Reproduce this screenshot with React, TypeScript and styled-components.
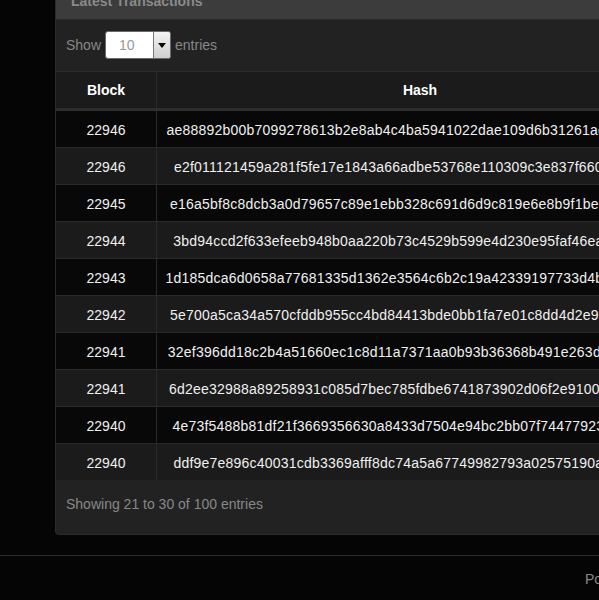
import React from 'react';
import styled, { createGlobalStyle } from 'styled-components';

const GlobalStyle = createGlobalStyle`
  html, body {
    margin: 0;
    padding: 0;
    background: #050505;
    overflow: hidden;
  }
  body {
    font-family: "Liberation Sans", Arial, sans-serif;
    font-size: 14px;
    color: #eee;
  }
`;

const Page = styled.div`
  width: 1400px;
  margin-top: -20px;
`;

const Content = styled.div`
  padding-left: 55px;
  width: 1200px;
`;

const Panel = styled.div`
  background: #222;
  border: 1px solid #2c2c2c;
  border-radius: 4px;
  overflow: hidden;
`;

const PanelHeading = styled.div`
  background: #3c3c3c;
  color: #8a8a8a;
  font-weight: 700;
  line-height: 20px;
  padding: 10px 15px 8px;
  border-bottom: 1px solid #2a2a2a;
`;

const Controls = styled.div`
  display: flex;
  align-items: center;
  gap: 4px;
  padding: 11px 10px 12px;
  color: #888;
  line-height: 28px;
`;

const Select = styled.div`
  display: flex;
  width: 66px;
  height: 28px;
  box-sizing: border-box;
  background: #fff;
  border: 1px solid #6a6a6a;
  border-radius: 3px;
  overflow: hidden;
`;

const SelectValue = styled.span`
  flex: 1;
  padding-left: 13px;
  color: #999;
  line-height: 26px;
`;

const SelectButton = styled.span`
  width: 16px;
  display: flex;
  align-items: center;
  justify-content: center;
  border-left: 1px solid #777;
  background: linear-gradient(#f4f4f4, #cfcfcf);
`;

const Table = styled.table`
  width: 100%;
  border-collapse: collapse;
`;

const Th = styled.th<{ $w?: number }>`
  width: ${({ $w }) => ($w ? `${$w}px` : 'auto')};
  background: #1b1b1b;
  color: #fff;
  font-weight: 700;
  text-align: center;
  line-height: 18px;
  padding: 9px 8px;
  border-top: 1px solid #2a2a2a;
  border-bottom: 3px solid #2e2e2e;
  border-left: 1px solid #2a2a2a;
  &:first-child {
    border-left: none;
  }
`;

const Tr = styled.tr<{ $odd: boolean }>`
  background: ${({ $odd }) => ($odd ? '#080808' : '#1b1b1b')};
`;

const Td = styled.td<{ $mono?: boolean }>`
  text-align: center;
  line-height: 18px;
  padding: 10px 8px 8px;
  white-space: nowrap;
  color: #f0f0f0;
  letter-spacing: ${({ $mono }) => ($mono ? '0.22px' : 'normal')};
  border-top: 1px solid #2a2a2a;
  border-left: 1px solid #2a2a2a;
  &:first-child {
    border-left: none;
  }
`;

const Info = styled.div`
  color: #888;
  line-height: 20px;
  padding: 13px 10px 20px;
  border-top: 1px solid #222;
`;

const Footer = styled.footer`
  margin-top: 20px;
  border-top: 1px solid #2a2a2a;
  padding: 13px 0 20px 585px;
  line-height: 20px;
  color: #888;
`;

const rows: [number, string][] = [
  [22946, 'ae88892b00b7099278613b2e8ab4c4ba5941022dae109d6b31261ac3f7e2d915'],
  [22946, 'e2f011121459a281f5fe17e1843a66adbe53768e110309c3e837f6604a1b9c2d'],
  [22945, 'e16a5bf8c8dcb3a0d79657c89e1ebb328c691d6d9c819e6e8b9f1be0a7c3d452'],
  [22944, '3bd94ccd2f633efeeb948b0aa220b73c4529b599e4d230e95faf46ea81c0d372'],
  [22943, '1d185dca6d0658a77681335d1362e3564c6b2c19a42339197733d4b06e2a8c95'],
  [22942, '5e700a5ca34a570cfddb955cc4bd84413bde0bb1fa7e01c8dd4d2e9b3a6c5087'],
  [22941, '32ef396dd18c2b4a51660ec1c8d11a7371aa0b93b36368b491e263d7c0a4e518'],
  [22941, '6d2ee32988a89258931c085d7bec785fdbe6741873902d06f2e91004b7a3c6d2'],
  [22940, '4e73f5488b81df21f3669356630a8433d7504e94bc2bb07f74477923a5d0c81e'],
  [22940, 'ddf9e7e896c40031cdb3369afff8dc74a5a67749982793a02575190a6c3e4b17'],
];

const App: React.FC = () => (
  <>
    <GlobalStyle />
    <Page>
      <Content>
        <Panel>
          <PanelHeading>Latest Transactions</PanelHeading>
          <Controls>
            Show
            <Select>
              <SelectValue>10</SelectValue>
              <SelectButton>
                <svg width="8" height="5" viewBox="0 0 8 5">
                  <path d="M0 0h8L4 5z" fill="#000" />
                </svg>
              </SelectButton>
            </Select>
            entries
          </Controls>
          <Table>
            <thead>
              <tr>
                <Th $w={84}>Block</Th>
                <Th $w={510}>Hash</Th>
                <Th>Recipients</Th>
                <Th>Amount (XMR)</Th>
                <Th>Timestamp</Th>
              </tr>
            </thead>
            <tbody>
              {rows.map(([block, hash], i) => (
                <Tr key={i} $odd={i % 2 === 0}>
                  <Td>{block}</Td>
                  <Td $mono>{hash}</Td>
                  <Td>2</Td>
                  <Td>1.00000000</Td>
                  <Td>2015-06-12 08:41:17</Td>
                </Tr>
              ))}
            </tbody>
          </Table>
          <Info>Showing 21 to 30 of 100 entries</Info>
        </Panel>
      </Content>
      <Footer>Powered by Iquidus Explorer</Footer>
    </Page>
  </>
);

export default App;
